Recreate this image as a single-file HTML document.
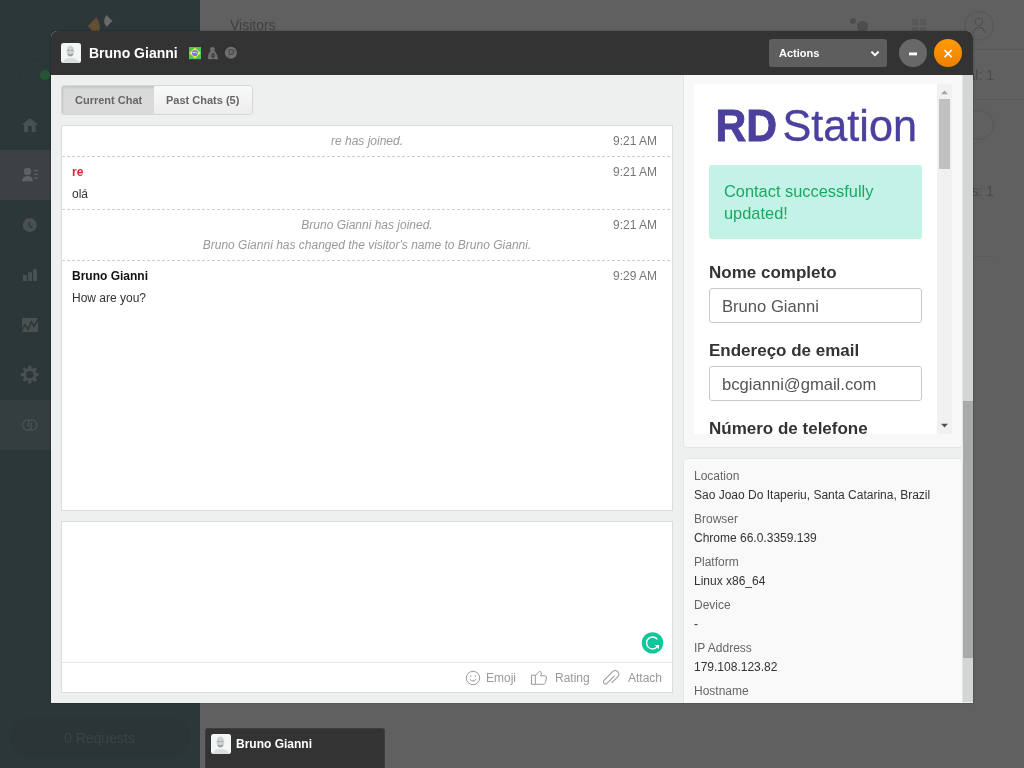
<!DOCTYPE html>
<html><head><meta charset="utf-8">
<style>
*{box-sizing:border-box;margin:0;padding:0}
html,body{width:1024px;height:768px;overflow:hidden}
body{position:relative;background:#606060;font-family:"Liberation Sans",sans-serif;}
.a{position:absolute;white-space:nowrap;will-change:transform}
.nav{position:absolute;left:0;width:200px;height:50px}
.circ{border-radius:50%}
.t12{font-size:12px;line-height:14px}
.time{position:absolute;left:600px;width:57px;text-align:right;font-size:12px;line-height:14px;color:#777}
.sys{position:absolute;left:62px;width:610px;text-align:center;font-size:12px;line-height:14px;font-style:italic;color:#999}
.dash{position:absolute;left:62px;width:610px;height:1px;background:repeating-linear-gradient(90deg,#cfcfcf 0 3px,transparent 3px 5px)}
.lbl{position:absolute;left:694px;font-size:12px;line-height:14px;color:#666}
.val{position:absolute;left:694px;font-size:12px;line-height:14px;color:#333}
.rdl{position:absolute;left:709px;font-size:17px;line-height:20px;font-weight:bold;color:#333}
.rdi{position:absolute;left:709px;width:213px;height:35px;border:1px solid #c9c9c9;border-radius:3px;background:#fff}
.rdv{position:absolute;left:722px;font-size:16.6px;line-height:20px;color:#555}
.ft{position:absolute;font-size:12px;line-height:14px;color:#999}
</style></head>
<body>
<!-- background app -->
<div class="a" style="left:0;top:0;width:200px;height:768px;background:#2c3739"></div>
<div class="nav" style="top:150px;background:#3c4244"></div>
<div class="nav" style="top:400px;background:#343d3f"></div>
<div class="a" style="left:200px;top:49px;width:824px;height:1px;background:#575757"></div>
<div class="a" style="left:973px;top:99px;width:51px;height:1px;background:#5a5a5a"></div>
<div class="a" style="left:973px;top:256px;width:21px;height:1px;background:#5a5a5a"></div>
<div class="a" style="left:230px;top:17px;font-size:14px;line-height:16px;color:#404040">Visitors</div>
<div class="a" style="left:894px;width:100px;text-align:right;top:67px;font-size:14px;line-height:16px;color:#4a4a4a">Total: 1</div>
<div class="a" style="left:894px;width:100px;text-align:right;top:183px;font-size:14px;line-height:16px;color:#4a4a4a">Visitors: 1</div>
<div class="a circ" style="left:964px;top:110px;width:30px;height:30px;border:1px solid #575757"></div>
<!-- top right icons -->
<div class="a circ" style="left:850px;top:18px;width:6px;height:6px;background:#4d4d4d"></div>
<div class="a circ" style="left:857px;top:21px;width:11px;height:11px;background:#4d4d4d"></div>
<div class="a" style="left:912px;top:19px;width:6px;height:6px;background:#575757"></div>
<div class="a" style="left:920px;top:19px;width:6px;height:6px;background:#575757"></div>
<div class="a" style="left:912px;top:27px;width:6px;height:6px;background:#575757"></div>
<div class="a" style="left:920px;top:27px;width:6px;height:6px;background:#575757"></div>
<svg class="a" style="left:960px;top:8px" width="40" height="40" viewBox="960 8 40 40">
<circle cx="979" cy="25.8" r="14.3" fill="none" stroke="#555" stroke-width="1"/>
<circle cx="979" cy="21.9" r="3.6" fill="none" stroke="#4e4e4e" stroke-width="1.1"/>
<path d="M973.2 33.2 Q974.5 27.4 979 27.4 Q983.5 27.4 985.2 32.6" fill="none" stroke="#4e4e4e" stroke-width="1.1"/>
</svg>
<!-- sidebar logo & dot -->
<svg class="a" style="left:0;top:0" width="200" height="460" viewBox="0 0 200 460">
<path d="M96.5 17 Q100.5 23 99.6 31 L92.3 31 L88 26 Z" fill="#614e33"/>
<path d="M106.6 15 L112.4 21 L106.6 26.8 Q101.6 21 106.6 15 Z" fill="#6a6a6a"/>
<circle cx="35" cy="75" r="15.3" fill="none" stroke="#2a3537" stroke-opacity="0.7" stroke-width="1"/>
<g fill="#4a4f50">
<path d="M29.8 118 L38 124.8 L35.7 124.8 L35.7 132 L31.8 132 L31.8 126 L28.1 126 L28.1 132 L24 132 L24 124.8 L21.8 124.8 Z"/>
</g>
<g fill="#606262">
<circle cx="27.5" cy="171.5" r="3.7"/>
<path d="M22 181.2 Q22.5 176 27.5 176 Q32.5 176 33 181.2 Z"/>
<rect x="34" y="169.9" width="3.8" height="1.3"/>
<rect x="34" y="173.7" width="3.8" height="1.3"/>
<rect x="34" y="177.5" width="3.8" height="1.3"/>
</g>
<circle cx="29.8" cy="225" r="7" fill="#4a4f50"/>
<path d="M29.4 222 L29.4 225.6 L32.3 228.2" fill="none" stroke="#2c3739" stroke-width="1.4"/>
<g fill="#4a4f50">
<rect x="23" y="275" width="3.9" height="6"/>
<rect x="28.1" y="272.1" width="3.9" height="8.9"/>
<rect x="33.1" y="269.2" width="3.9" height="11.8"/>
<rect x="22" y="318" width="16" height="14" rx="1"/>
</g>
<path d="M21.5 330.5 L25 324.8 L28 329.4 L31.4 321.8 L33.9 326.2 L38.5 318.6" fill="none" stroke="#2c3739" stroke-width="1.5"/>
<g transform="translate(29.8 374.6)" fill="#4a4f50">
<circle r="6.6"/>
<g id="tooth"><rect x="-1.6" y="-8.9" width="3.2" height="4" rx="0.6"/></g>
<use href="#tooth" transform="rotate(45)"/><use href="#tooth" transform="rotate(90)"/><use href="#tooth" transform="rotate(135)"/><use href="#tooth" transform="rotate(180)"/><use href="#tooth" transform="rotate(225)"/><use href="#tooth" transform="rotate(270)"/><use href="#tooth" transform="rotate(315)"/>
<circle r="3.7" fill="#2c3739"/>
</g>
<g fill="none" stroke="#4e5354" stroke-width="1.25" stroke-linecap="round">
<path d="M29.6 420.4 A 4.9 5.1 0 1 0 29.6 429.6"/>
<path d="M30 420.4 A 4.9 5.1 0 1 1 30 429.6"/>
<path d="M28.3 426.6 Q28.2 422 30 420.4"/>
<path d="M31.5 423.2 Q31.6 428 29.8 429.6"/>
</g>
</svg>
<div class="a circ" style="left:40px;top:70px;width:10px;height:10px;background:#275434"></div>
<!-- requests -->
<div class="a" style="left:10px;top:717px;width:180px;height:41px;border-radius:21px;background:#2b3537"></div>
<div class="a" style="left:64px;top:730px;font-size:14px;line-height:16px;color:#3a4446">0 Requests</div>
<!-- bottom chat tab -->
<div class="a" style="left:205px;top:728px;width:180px;height:40px;background:#333;border-radius:3px 3px 0 0;border:1px solid #3d3d3d;border-bottom:0"></div>
<svg class="a" style="left:211px;top:734px" width="20" height="20" viewBox="0 0 20 20"><rect width="20" height="20" rx="2.5" fill="#f3f6f5"/><path d="M1.5 20 Q2.5 16 7 15 L12 15 Q17 16 18.5 20 Z" fill="#d9dfde"/><ellipse cx="9.4" cy="8.3" rx="3.9" ry="5.7" fill="#ccd3d2"/><ellipse cx="7.7" cy="7.4" rx="1.2" ry="0.7" fill="#98a2a1"/><ellipse cx="11.1" cy="7.4" rx="1.2" ry="0.7" fill="#98a2a1"/><path d="M7 11.2 Q9.4 13.6 11.8 11.2" stroke="#7e8887" stroke-width="1.1" fill="none"/></svg>
<div class="a" style="left:236px;top:737px;font-size:12px;line-height:14px;font-weight:bold;color:#fff">Bruno Gianni</div>

<!-- modal -->
<div class="a" style="left:51px;top:31px;width:922px;height:672px;background:#eef0ef;border-radius:6px 6px 0 0;overflow:hidden;box-shadow:0 0 1.5px 1px rgba(0,0,0,.13)">
<div class="a" style="left:-51px;top:-31px;width:1024px;height:768px">
  <div class="a" style="left:51px;top:31px;width:922px;height:44px;background:#333"></div>
<!-- header -->
<svg class="a" style="left:61px;top:43px" width="20" height="20" viewBox="0 0 20 20"><rect width="20" height="20" rx="2.5" fill="#f3f6f5"/><path d="M1.5 20 Q2.5 16 7 15 L12 15 Q17 16 18.5 20 Z" fill="#d9dfde"/><ellipse cx="9.4" cy="8.3" rx="3.9" ry="5.7" fill="#ccd3d2"/><ellipse cx="7.7" cy="7.4" rx="1.2" ry="0.7" fill="#98a2a1"/><ellipse cx="11.1" cy="7.4" rx="1.2" ry="0.7" fill="#98a2a1"/><path d="M7 11.2 Q9.4 13.6 11.8 11.2" stroke="#7e8887" stroke-width="1.1" fill="none"/></svg>
<div class="a" style="left:89px;top:45px;font-size:14px;line-height:16px;font-weight:bold;color:#fff">Bruno Gianni</div>
<svg class="a" style="left:185px;top:44px" width="60" height="18" viewBox="185 44 60 18">
<rect x="189" y="47" width="12" height="12.2" fill="#45c85a"/>
<path d="M195 47.8 L200.8 53.1 L195 58.4 L189.2 53.1 Z" fill="#f0ef3c"/>
<circle cx="195" cy="53.1" r="3.1" fill="#7a7ad6"/>
<path d="M192.6 52.4 Q195.5 51.6 197.6 53.8" stroke="#e8e8f8" stroke-width="0.8" fill="none"/>
<g fill="#6e6e6e">
<ellipse cx="212.4" cy="49.1" rx="2.5" ry="2.2"/>
<path d="M210.6 50.8 Q208.4 53.2 207.9 57 L207.9 59.2 L211.8 59.2 L213 58.6 L214.2 59.2 L218 59.2 Q217.8 56 216.1 53 Q215.2 51.3 214.2 50.8 Z"/>
</g>
<ellipse cx="213.1" cy="55.4" rx="1.9" ry="2.4" fill="#3d3d3d"/>
<path d="M211.4 55.2 L214.8 55.2" stroke="#6e6e6e" stroke-width="0.7"/>
<circle cx="230.9" cy="52.8" r="6" fill="#707070"/>
<rect x="229.1" y="49.7" width="4.3" height="4.6" rx="0.8" fill="#6a6a6a" stroke="#3c3c3c" stroke-width="0.8"/>
<path d="M226.6 48.2 L229.2 50.8 M233.4 51 L236.8 50.8 M229.4 54.3 L228.3 58.4" stroke="#4a4a4a" stroke-width="0.6"/>
</svg>
<div class="a" style="left:769px;top:39px;width:118px;height:28px;background:#5e5e5e;border-radius:3px"></div>
<div class="a" style="left:779px;top:46px;font-size:11px;line-height:14px;font-weight:bold;color:#fff">Actions</div>
<div class="a circ" style="left:899px;top:39px;width:28px;height:28px;background:#686868"></div>
<div class="a circ" style="left:934px;top:39px;width:28px;height:28px;background:linear-gradient(#ff9b06,#ee7f02)"></div>
<svg class="a" style="left:860px;top:38px" width="110" height="30" viewBox="860 38 110 30">
<path d="M871.4 51.6 L875 55.2 L878.6 51.6" fill="none" stroke="#fff" stroke-width="2"/>
<rect x="909" y="52.5" width="8" height="2.8" fill="#fff"/>
<path d="M944.5 50 L951.7 57.2 M951.7 50 L944.5 57.2" stroke="#fff" stroke-width="1.7"/>
</svg>

<!-- tabs -->
<div class="a" style="left:61px;top:85px;width:192px;height:30px;border:1px solid #d6d6d6;border-radius:3px;background:linear-gradient(#f9f9f9,#ededed)"></div>
<div class="a" style="left:62px;top:86px;width:92px;height:28px;background:#dadada;border-radius:2px 0 0 2px;box-shadow:inset 1px 2px 2px rgba(0,0,0,.09)"></div>
<div class="a" style="left:75px;top:93px;font-size:11px;line-height:14px;font-weight:bold;color:#666">Current Chat</div>
<div class="a" style="left:166px;top:93px;font-size:11px;line-height:14px;font-weight:bold;color:#666">Past Chats (5)</div>

<!-- log -->
<div class="a" style="left:61px;top:125px;width:612px;height:386px;background:#fff;border:1px solid #dcdcdc"></div>
<div class="sys" style="top:134px">re has joined.</div>
<div class="time" style="top:134px">9:21 AM</div>
<div class="dash" style="top:156px"></div>
<div class="a" style="left:72px;top:165px;font-size:12px;line-height:14px;font-weight:bold;color:#d8263d">re</div>
<div class="time" style="top:165px">9:21 AM</div>
<div class="a" style="left:72px;top:187px;font-size:12px;line-height:14px;color:#333">olá</div>
<div class="dash" style="top:209px"></div>
<div class="sys" style="top:218px">Bruno Gianni has joined.</div>
<div class="time" style="top:218px">9:21 AM</div>
<div class="sys" style="top:238px">Bruno Gianni has changed the visitor's name to Bruno Gianni.</div>
<div class="dash" style="top:260px"></div>
<div class="a" style="left:72px;top:269px;font-size:12px;line-height:14px;font-weight:bold;color:#111">Bruno Gianni</div>
<div class="time" style="top:269px">9:29 AM</div>
<div class="a" style="left:72px;top:291px;font-size:12px;line-height:14px;color:#333">How are you?</div>

<!-- input -->
<div class="a" style="left:61px;top:521px;width:612px;height:172px;background:#fff;border:1px solid #dcdcdc"></div>
<div class="a" style="left:62px;top:662px;width:610px;height:1px;background:#e6e6e6"></div>
<svg class="a" style="left:460px;top:628px" width="212" height="62" viewBox="460 628 212 62">
<circle cx="652.5" cy="642.9" r="10.7" fill="#12c69a"/>
<path d="M657.4 639.4 A 6 6 0 1 0 657 647" fill="none" stroke="#fff" stroke-width="1.4"/>
<path d="M654.8 645 L659 645 L659 649.2 Z" fill="#fff"/>
<g fill="none" stroke="#999" stroke-width="1">
<circle cx="473" cy="678" r="6.7"/>
<path d="M469.6 679 Q473 683 476.4 679"/>
<path d="M531.5 675.2 H535.3 V684.3 H531.5 Z"/>
<path d="M535.3 675.6 L538.4 672.2 Q539.6 670.9 540.8 671.8 Q541.8 672.7 541.2 674.3 L540.6 675.8 L545 675.8 Q546.9 676 546.5 677.9 L545.4 682.6 Q545 684.3 543.2 684.3 L535.3 684.3" stroke-linejoin="round"/>
<path transform="translate(611.2 678.2) rotate(45)" d="M3.6 2.6 V-5.6 A 3.6 3.6 0 0 0 -3.6 -5.6 V6.6 A 2.1 2.1 0 0 0 0.6 6.6 V-3.6" stroke-linecap="round"/>
</g>
<g fill="#999"><circle cx="470.6" cy="676" r="0.8"/><circle cx="475.4" cy="676" r="0.8"/></g>
</svg>
<div class="ft" style="left:486px;top:671px">Emoji</div>
<div class="ft" style="left:555px;top:671px">Rating</div>
<div class="ft" style="left:628px;top:671px">Attach</div>

<!-- right panel 1 -->
<div class="a" style="left:683px;top:75px;width:280px;height:373px;background:#f8f8f8;border:1px solid #e4e6e5;border-top:0;border-radius:0 0 4px 4px"></div>
<div class="a" style="left:694px;top:84px;width:243px;height:350px;background:#fff"></div>
<div class="a" style="left:937px;top:84px;width:15px;height:350px;background:#f1f1f1"></div>
<div class="a" style="left:939px;top:99px;width:11px;height:70px;background:#c1c1c1"></div>
<svg class="a" style="left:937px;top:84px" width="15" height="350" viewBox="0 0 15 350">
<path d="M4 10.3 L11 10.3 L7.5 6.5 Z" fill="#a3a3a3"/>
<path d="M4 339.8 L11 339.8 L7.5 343.5 Z" fill="#505050"/>
</svg>
<!-- RD content -->
<svg class="a" style="left:694px;top:84px" width="243" height="80" viewBox="694 84 243 80">
<text x="715.5" y="140.5" font-family="Liberation Sans" font-weight="bold" font-size="45" fill="#4b409d" stroke="#4b409d" stroke-width="0.9" textLength="61.5" lengthAdjust="spacingAndGlyphs">RD</text>
<text x="782.5" y="140.5" font-family="Liberation Sans" font-size="44" fill="#4b409d" stroke="#4b409d" stroke-width="0.35" textLength="134.5" lengthAdjust="spacingAndGlyphs">Station</text>
</svg>
<div class="a" style="left:709px;top:165px;width:213px;height:74px;background:#c3f3e7;border-radius:3px"></div>
<div class="a" style="left:724px;top:180.8px;font-size:16.4px;line-height:21.5px;color:#1aa860">Contact successfully<br>updated!</div>
<div class="rdl" style="top:263px">Nome completo</div>
<div class="rdi" style="top:288px"></div>
<div class="rdv" style="top:297px">Bruno Gianni</div>
<div class="rdl" style="top:341px">Endereço de email</div>
<div class="rdi" style="top:366px"></div>
<div class="rdv" style="top:375px">bcgianni@gmail.com</div>
<div class="a" style="left:694px;top:410px;width:243px;height:24px;overflow:hidden">
  <div class="rdl" style="left:15px;top:9px">Número de telefone</div>
</div>

<!-- right panel 2 -->
<div class="a" style="left:683px;top:458px;width:280px;height:260px;background:#f9f9f9;border:1px solid #e4e6e5;border-radius:4px"></div>
<div class="lbl" style="top:469px">Location</div>
<div class="val" style="top:488px">Sao Joao Do Itaperiu, Santa Catarina, Brazil</div>
<div class="lbl" style="top:512px">Browser</div>
<div class="val" style="top:531px">Chrome 66.0.3359.139</div>
<div class="lbl" style="top:555px">Platform</div>
<div class="val" style="top:574px">Linux x86_64</div>
<div class="lbl" style="top:598px">Device</div>
<div class="val" style="top:617px">-</div>
<div class="lbl" style="top:641px">IP Address</div>
<div class="val" style="top:660px">179.108.123.82</div>
<div class="lbl" style="top:684px">Hostname</div>

<!-- modal scrollbar -->
<div class="a" style="left:963px;top:75px;width:10px;height:627px;background:#d4d6d6"></div>
<div class="a" style="left:963px;top:401px;width:10px;height:257px;background:#a9aaaa"></div>
</div></div>
</body></html>
